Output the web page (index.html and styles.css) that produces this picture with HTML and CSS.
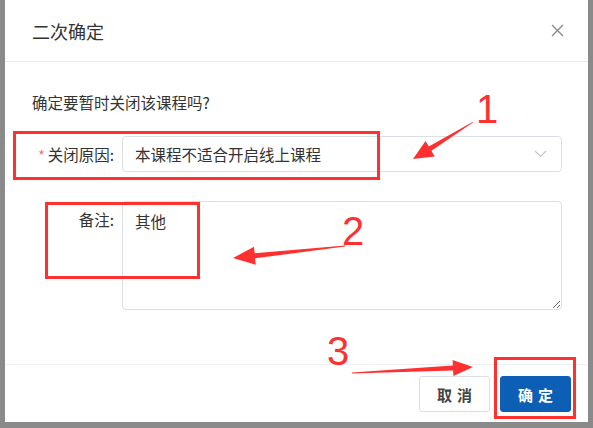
FILE: index.html
```html
<!DOCTYPE html>
<html lang="zh-CN">
<head>
    <meta charset="UTF-8">
    <meta name="viewport" content="width=device-width, initial-scale=1.0">
    <title>二次确定</title>
    <link rel="stylesheet" href="styles.css">
</head>
<body>
    <div class="mask">
        <div class="dialog">
            <div class="dialog-header">
                <span class="dialog-title">二次确定</span>
                <svg class="close" width="13" height="13" viewBox="0 0 13 13">
                    <path d="M1 1L12 12M12 1L1 12" stroke="#8a8a8a" stroke-width="1.4" fill="none"/>
                </svg>
            </div>
            <div class="dialog-body">
                <p class="tip">确定要暂时关闭该课程吗?</p>
                <div class="form-item">
                    <label class="form-label"><i class="required">*</i>关闭原因:</label>
                    <div class="select">
                        <span>本课程不适合开启线上课程</span>
                        <svg width="13" height="8" viewBox="0 0 13 8">
                            <path d="M1 1L6.5 6.5L12 1" stroke="#c0c4cc" stroke-width="1.2" fill="none"/>
                        </svg>
                    </div>
                </div>
                <div class="form-item">
                    <label class="form-label">备注:</label>
                    <textarea class="textarea">其他</textarea>
                </div>
            </div>
            <div class="dialog-footer">
                <button class="btn">取消</button>
                <button class="btn btn-primary">确定</button>
            </div>
        </div>
    </div>
    <!-- 标注 -->
    <svg class="marks" width="593" height="428" viewBox="0 0 593 428">
        <rect x="14.5" y="132.5" width="364" height="46" class="box"/>
        <rect x="46.5" y="203.5" width="152" height="74" class="box"/>
        <rect x="495.5" y="358.5" width="79" height="59" class="box"/>
        <polygon class="arrow" points="473,122.5 431.4,150.8 434.7,156.4 413,159 425.5,141 428.8,146.6 472.6,122"/>
        <polygon class="arrow" points="345,245.4 254.7,253.3 254,246.8 233,258 255.8,264.8 255.1,258.3 345,246.6"/>
        <polygon class="arrow" points="352,372.4 452.9,365.5 452.6,360 473,367 453.4,376 453.1,370.5 352,373.6"/>
        <text x="487" y="123" class="num">1</text>
        <text x="353" y="245" class="num">2</text>
        <text x="338" y="365" class="num">3</text>
    </svg>
</body>
</html>
```
FILE: styles.css
```css
body{margin: 0;background: #8a8a8a;font-family: "Noto Sans CJK SC", "Liberation Sans", sans-serif;color: #333;}
.mask{height: 428px;padding-left: 5px;}
.dialog{width: 583px;height: 422px;background: #fff;display: flex;flex-direction: column;}
.dialog-header{height: 61px;flex-shrink: 0;border-bottom: 1px solid #e9e9e9;display: flex;align-items: center;justify-content: space-between;padding: 0 24px 0 27px;}
.dialog-title{font-size: 18px;color: #333;}
.close{display: block;}
.dialog-body{flex: 1;padding: 30px 26px 0 27px;font-size: 15.5px;}
.tip{margin: 0 0 24px;line-height: 20px;}
.form-item{display: flex;margin-bottom: 28px;}
.form-label{width: 90px;padding-right: 8px;box-sizing: border-box;text-align: right;line-height: 36px;flex-shrink: 0;white-space: nowrap;}
.required{font-style: normal;color: #f56c6c;margin-right: 3px;font-size: 14px;}
.select{flex: 1;height: 36px;box-sizing: border-box;border: 1px solid #dcdfe6;border-radius: 4px;display: flex;align-items: center;justify-content: space-between;padding: 0 14px 0 12px;}
.textarea{flex: 1;height: 109px;box-sizing: border-box;border: 1px solid #dcdfe6;border-radius: 4px;padding: 8px 12px;font: inherit;color: #333;resize: vertical;margin: 0;}
.dialog-footer{flex-shrink: 0;border-top: 1px solid #ebeef5;padding: 11px 17px 10px;display: flex;justify-content: flex-end;gap: 10px;}
.btn{width: 71px;height: 36px;border: 1px solid #dcdfe6;border-radius: 3px;background: #fff;font-family: inherit;font-size: 15px;font-weight: bold;color: #444;letter-spacing: 5px;text-indent: 5px;}
.btn-primary{background: #0c5fb4;border-color: #0c5fb4;color: #fff;}
.marks{position: absolute;left: 0;top: 0;pointer-events: none;}
.box{fill: none;stroke: #fe3030;stroke-width: 3;}
.arrow{fill: #fe3030;}
.num{fill: #fe3030;font-family: "Liberation Sans", sans-serif;font-size: 40px;text-anchor: middle;}
```
